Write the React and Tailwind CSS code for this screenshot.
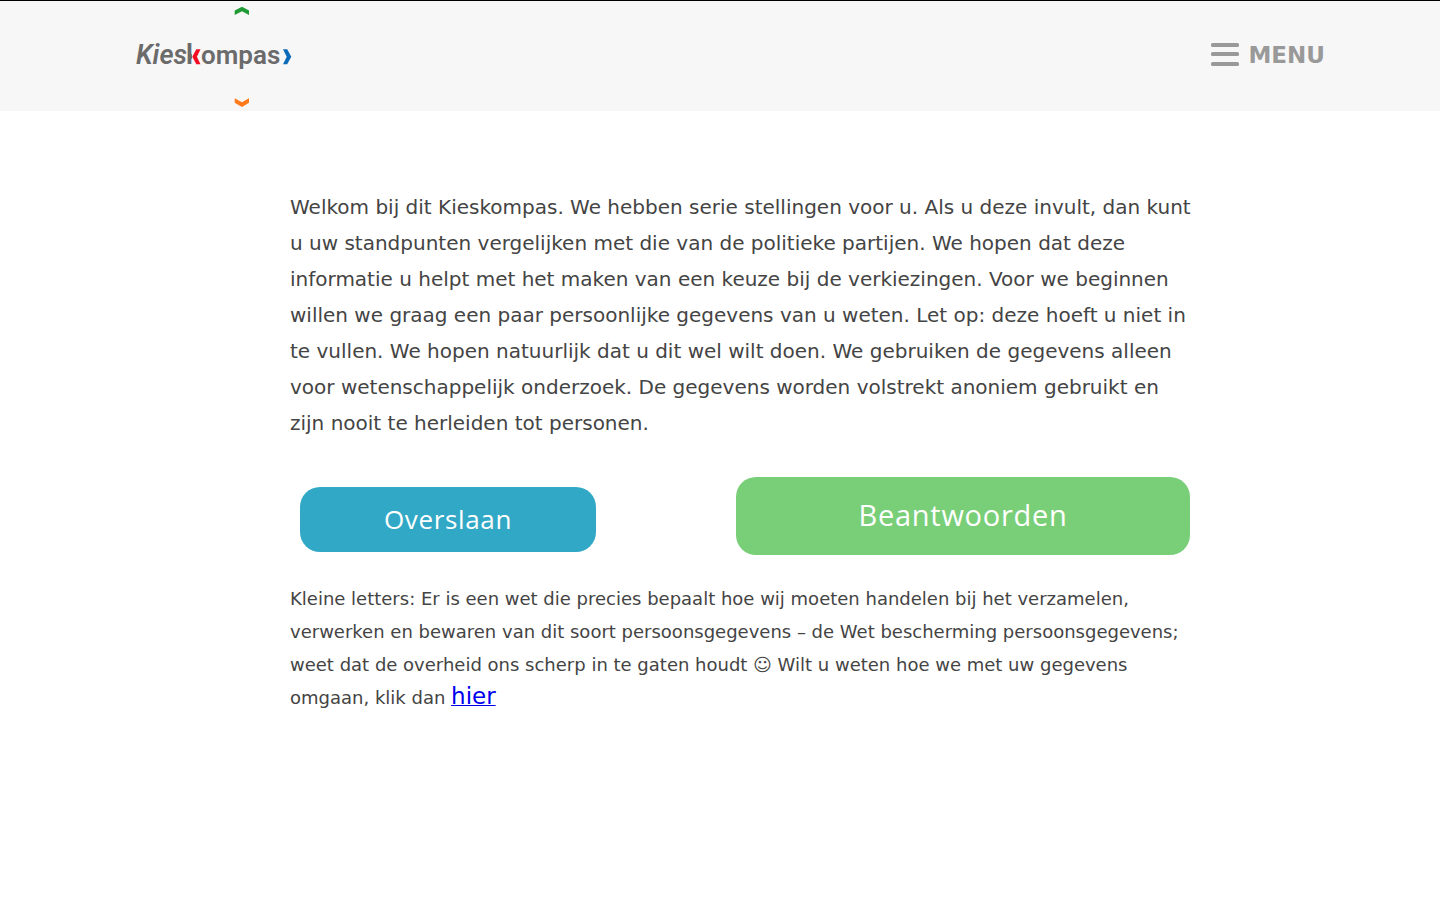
function Logo() {
  return (
    <svg width="180" height="110" viewBox="0 0 180 110" role="img" aria-label="Kieskompas" className="block">
      <defs>
        <clipPath id="stem">
          <rect x="70" y="36" width="5" height="32" />
        </clipPath>
      </defs>
      <path d="M117.700 9.500V14l7.300-3.700 7 3.700V9.500L125 5.700z" fill="#1f9a34" />
      <path d="M117.700 97.300v4.400l7.300 4.300 7-4.300v-4.400l-7 4z" fill="#ff7a1a" />
      <g fill="#6b6b6b" className="font-[Roboto] text-[27px] font-semibold">
        <text x="19" y="63" className="italic">Kies</text>
        <text x="69" y="63" className="text-[28px]" clipPath="url(#stem)">k</text>
        <text x="84" y="63" className="text-[26px]">ompas</text>
      </g>
      <path d="M79.300 48.300h4.200L79.900 55.800 83.500 63.300H79.300L75.300 55.800z" fill="#f20d23" />
      <path d="M166 48.300h4.200L174.300 55.800 170.200 63.300H166l3.700-7.500z" fill="#0b6bb8" />
    </svg>
  );
}

export default function App() {
  return (
    <div className="min-h-screen bg-white font-['DejaVu_Sans',sans-serif] text-[#444444]">
      <header className="flex items-center justify-between border-t border-black bg-[#f7f7f7] pr-[115px] pl-[117px]">
        <a href="#home">
          <Logo />
        </a>
        <button type="button" className="flex items-center gap-2 pb-0.5 text-[23px] leading-8 font-bold text-[#999999]">
          <svg width="30" height="24" viewBox="0 0 30 24" fill="currentColor" aria-hidden="true">
            <rect x="1" y="0" width="28" height="4" rx="1.500" />
            <rect x="1" y="9" width="28" height="4" rx="1.500" />
            <rect x="1" y="19" width="28" height="4" rx="1.500" />
          </svg>
          MENU
        </button>
      </header>
      <main className="mx-auto max-w-[940px] pt-[78px] pl-10">
        <p className="-mr-1 text-[20px] leading-9">
          Welkom bij dit Kieskompas. We hebben serie stellingen voor u. Als u deze invult, dan kunt u uw standpunten
          vergelijken met die van de politieke partijen. We hopen dat deze informatie u helpt met het maken van een
          keuze bij de verkiezingen. Voor we beginnen willen we graag een paar persoonlijke gegevens van u weten. Let
          op: deze hoeft u niet in te vullen. We hopen natuurlijk dat u dit wel wilt doen. We gebruiken de gegevens
          alleen voor wetenschappelijk onderzoek. De gegevens worden volstrekt anoniem gebruikt en zijn nooit te
          herleiden tot personen.
        </p>
        <div className="mt-9 flex items-start justify-between pl-[10px] font-['Open_Sans',sans-serif] text-white">
          <button type="button" className="mt-[10px] w-[296px] rounded-[20px] bg-[#31a8c6] pt-4 pb-[17px] text-[26px] leading-8 tracking-wide">
            Overslaan
          </button>
          <button type="button" className="w-[454px] rounded-[20px] bg-[#79ce78] pt-[18px] pb-5 text-[29px] leading-10 tracking-wide">
            Beantwoorden
          </button>
        </div>
        <p className="mt-[27px] text-[18px] leading-[33px]">
          Kleine letters: Er is een wet die precies bepaalt hoe wij moeten handelen bij het verzamelen, verwerken en
          bewaren van dit soort persoonsgegevens – de Wet bescherming persoonsgegevens; weet dat de overheid ons scherp
          in te gaten houdt ☺ Wilt u weten hoe we met uw gegevens omgaan, klik dan{" "}
          <a href="#privacy" className="text-[23px] leading-none text-[#0000ee] underline decoration-1">hier</a>
        </p>
      </main>
    </div>
  );
}
